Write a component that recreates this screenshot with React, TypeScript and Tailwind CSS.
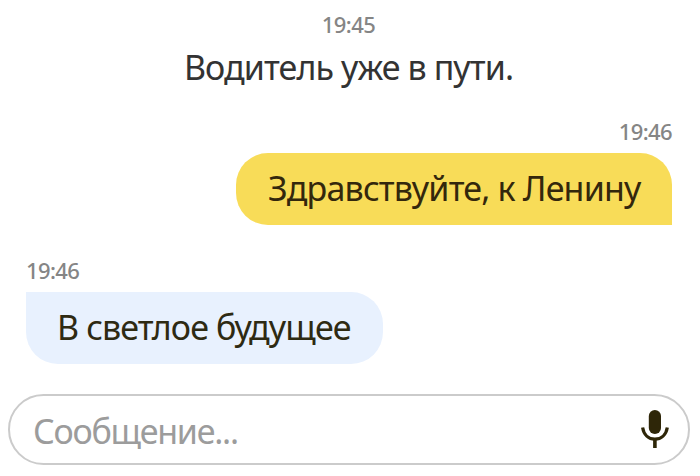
import React, { useState } from 'react'

const MicIcon = () => (
  <svg className="h-10 w-7" viewBox="0 0 28 40" fill="none">
    <rect x="7.8" y="0" width="12.2" height="24" rx="6.1" fill="#2e2608" />
    <path d="M1.6 17.5c1.2 7.4 6 11.7 12.3 11.7s11.2-4.3 12.4-11.7" stroke="#2e2608" strokeWidth="3.2" />
    <path d="M13.9 29v9" stroke="#2e2608" strokeWidth="3.6" />
  </svg>
)

const Time = ({ value }: { value: string }) => (
  <time className="text-[22px] leading-8 font-medium tracking-[-0.6px] text-[#858585]">{value}</time>
)

const App = () => {
  const [message, setMessage] = useState('')

  return (
    <main className="flex h-[476px] w-[700px] flex-col overflow-hidden bg-white pt-2 font-['Noto_Sans',sans-serif] whitespace-nowrap">
      {/* System message */}
      <div className="flex flex-col items-center pr-[3px]">
        <Time value="19:45" />
        <p className="mt-[3px] text-[34px] leading-[48px] tracking-[-0.9px] text-[#333333]">Водитель уже в пути.</p>
      </div>

      {/* Outgoing message */}
      <div className="mt-6 mr-7 flex flex-col items-end">
        <Time value="19:46" />
        <div className="mt-1.5 flex h-[72px] w-[436px] rounded-t-[32px] rounded-bl-[32px] bg-[#f8dc58] pl-8 text-[34px] leading-[70px] tracking-[-0.82px] text-[#33270c]">
          Здравствуйте, к Ленину
        </div>
      </div>

      {/* Incoming message */}
      <div className="mt-[29px] ml-[26px] flex flex-col items-start">
        <Time value="19:46" />
        <div className="mt-1.5 flex h-[72px] w-[357px] rounded-r-[32px] rounded-bl-[32px] bg-[#e8f1fe] pl-[31px] text-[34px] leading-[70px] tracking-[-0.88px] text-[#2e2a12]">
          В светлое будущее
        </div>
      </div>

      {/* Message input */}
      <div className="mt-[30px] ml-2 flex h-[71px] w-[682px] items-center rounded-full border-2 border-[#cbcbcb] pr-[19px] pl-[23px]">
        <input
          className="h-14 min-w-0 flex-1 pt-0.5 text-[34px] tracking-[-1.25px] text-[#33270c] outline-none placeholder:text-[#9c9c9c]"
          placeholder="Сообщение..."
          value={message}
          onChange={(e) => setMessage(e.target.value)}
        />
        <button aria-label="Голосовое сообщение">
          <MicIcon />
        </button>
      </div>
    </main>
  )
}

export default App
